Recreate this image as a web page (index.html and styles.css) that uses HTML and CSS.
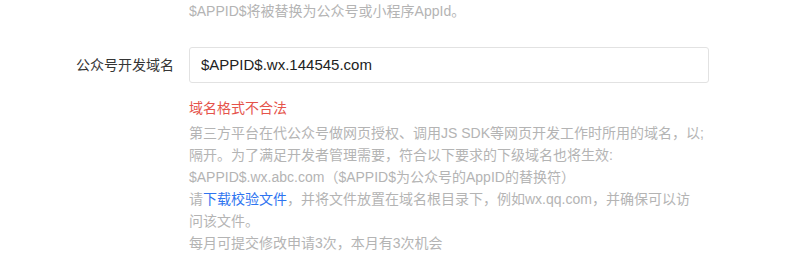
FILE: index.html
```html
<!DOCTYPE html>
<html lang="zh-CN">
<head>
<meta charset="utf-8">
<link rel="stylesheet" href="styles.css">
</head>
<body>
<div class="form">
  <div class="row">
    <div class="label"></div>
    <div class="field">
      <div class="tip top-tip">$APPID$将被替换为公众号或小程序AppId。</div>
    </div>
  </div>
  <div class="row main-row">
    <div class="label"><span class="label-text">公众号开发域名</span></div>
    <div class="field">
      <div class="input">$APPID$.wx.144545.com</div>
      <div class="error">域名格式不合法</div>
      <div class="tip">第三方平台在代公众号做网页授权、调用JS SDK等网页开发工作时所用的域名，以;<br>隔开。为了满足开发者管理需要，符合以下要求的下级域名也将生效:<br>$APPID$.wx.abc.com（$APPID$为公众号的AppID的替换符）<br>请<a class="link" href="#">下载校验文件</a>，并将文件放置在域名根目录下，例如wx.qq.com，并确保可以访<br>问该文件。</div>
      <div class="tip">每月可提交修改申请3次，本月有3次机会</div>
    </div>
  </div>
</div>
</body>
</html>
```

FILE: styles.css
```css
html, body {
  margin: 0;
  padding: 0;
  background: #ffffff;
}
body {
  font-family: "Liberation Sans", "Noto Sans CJK SC", sans-serif;
  font-size: 14px;
  color: #353535;
}
.form {
  display: flex;
  flex-direction: column;
}
.row {
  display: flex;
}
.main-row {
  margin-top: 25px;
}
.label {
  width: 174px;
  flex: none;
  text-align: right;
  margin-right: 15px;
}
.label-text {
  display: block;
  line-height: 36px;
  font-size: 14px;
  color: #353535;
}
.field {
  width: 520px;
  flex: none;
}
.tip {
  color: #b4b4b4;
  line-height: 22px;
  white-space: nowrap;
}
.top-tip {
  line-height: 22px;
}
.input {
  box-sizing: border-box;
  height: 36px;
  border: 1px solid #e2e2e2;
  border-radius: 3px;
  padding: 0 11px;
  line-height: 34px;
  font-size: 15px;
  color: #222222;
}
.error {
  margin-top: 14px;
  line-height: 22px;
  color: #e5534b;
  margin-bottom: 3px;
}
.link {
  color: #2e74f0;
  text-decoration: none;
}
```
